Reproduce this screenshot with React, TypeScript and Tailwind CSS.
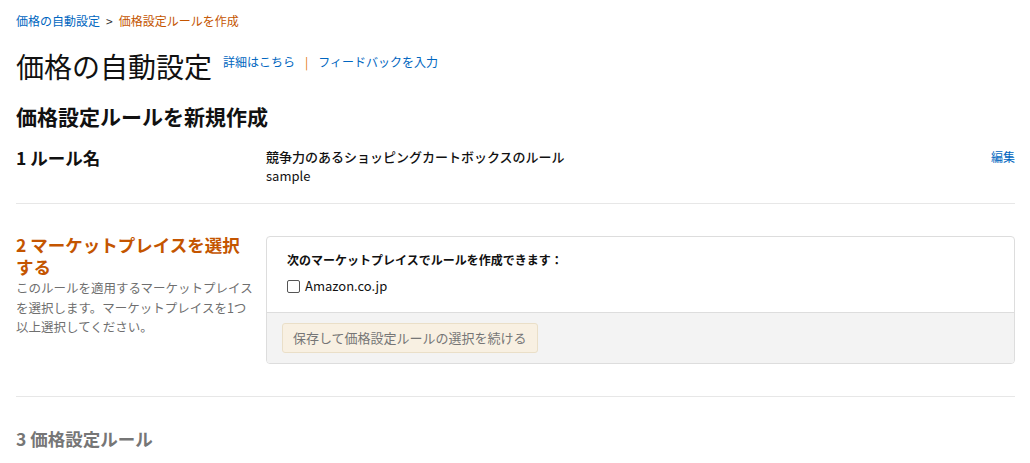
// Price automation: create pricing rule page

const font = { fontFamily: '"Noto Sans CJK JP", "Noto Sans", sans-serif' }

function Divider() {
  return <div className="h-px bg-[#e7e7e7]" />
}

export default function App() {
  return (
    <div className="min-h-[463px] bg-white pl-4 pr-[15px] pt-[13px] text-[#111]" style={font}>
      {/* breadcrumb */}
      <div className="flex items-center gap-[6px] text-[12px] leading-[16px]">
        <span className="text-[#0066c0]">価格の自動設定</span>
        <span className="text-[#333]">&gt;</span>
        <span className="text-[#c45500]">価格設定ルールを作成</span>
      </div>

      {/* title */}
      <div className="mt-[21px] flex items-start gap-[11px]">
        <h1 className="text-[28px] font-normal leading-[32px]">価格の自動設定</h1>
        <div className="mt-[4px] flex items-center gap-[10px] text-[12px] leading-[16px] text-[#0066c0]">
          <span>詳細はこちら</span>
          <span className="text-[#e47911]">|</span>
          <span>フィードバックを入力</span>
        </div>
      </div>

      <h2 className="mt-[20px] text-[21px] font-bold leading-[28px]">価格設定ルールを新規作成</h2>

      {/* section 1 */}
      <div className="mt-[16px] flex pb-[18px]">
        <div className="w-[250px] shrink-0 text-[17.5px] font-bold leading-[24px]">1 ルール名</div>
        <div className="flex-1 pt-[1px] text-[13px] leading-[19px]">
          <div className="font-medium">競争力のあるショッピングカートボックスのルール</div>
          <div>sample</div>
        </div>
        <div className="pt-[1px] text-[12px] leading-[19px] text-[#0066c0]">編集</div>
      </div>
      <Divider />

      {/* section 2 */}
      <div className="mt-[32px] flex">
        <div className="w-[250px] shrink-0">
          <div className="-mt-[2px] max-w-[236px] text-[17.5px] font-bold leading-[22px] text-[#c45500]">
            2 マーケットプレイスを選択する
          </div>
          <p className="whitespace-nowrap text-[12.5px] leading-[19.5px] text-[#6f6f6f]">
            このルールを適用するマーケットプレイス
            <br />
            を選択します。マーケットプレイスを1つ
            <br />
            以上選択してください。
          </p>
        </div>
        <div className="flex-1 overflow-hidden rounded-[4px] border border-[#dddddd]">
          <div className="px-5 pb-[16px] pt-[13px] text-[13px] leading-[20px]">
            <div className="text-[12px] font-bold">次のマーケットプレイスでルールを作成できます：</div>
            <label className="mt-[6px] flex items-center gap-[5px]">
              <span className="h-[13px] w-[13px] rounded-[2px] border border-[#555]" />
              <span>Amazon.co.jp</span>
            </label>
          </div>
          <div className="border-t border-[#dddddd] bg-[#f3f3f3] px-[15px] py-[10px]">
            <button className="h-[30px] rounded-[3px] border border-[#eadfc8] bg-[#f8f0e2] px-[10px] text-[13px] text-[#767676]">
              保存して価格設定ルールの選択を続ける
            </button>
          </div>
        </div>
      </div>

      <div className="mt-[32px]">
        <Divider />
      </div>

      {/* section 3 */}
      <div className="mt-[30px] text-[17.5px] font-bold leading-[24px] text-[#767676]">3 価格設定ルール</div>
    </div>
  )
}
